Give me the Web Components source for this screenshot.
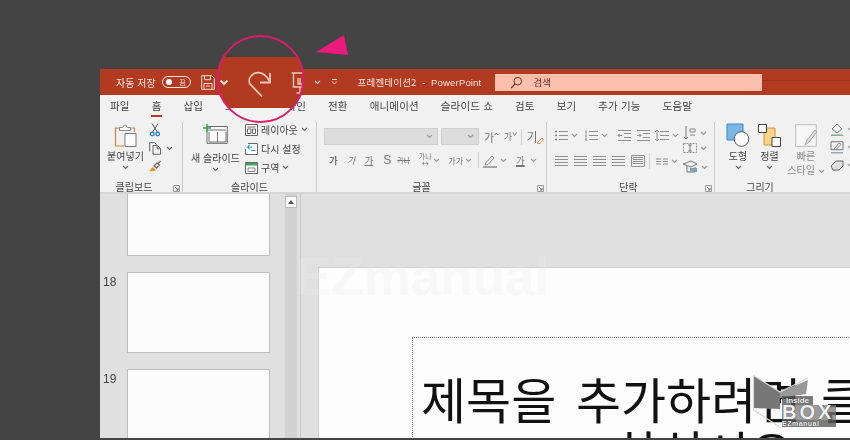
<!DOCTYPE html>
<html lang="ko">
<head>
<meta charset="utf-8">
<style>
  html, body { margin: 0; height: 440px; overflow: hidden; background: #444; }
  body { font-family: "Noto Sans CJK KR", "Noto Sans", sans-serif; }
</style>
</head>
<body>
<ppt-window>
  <title-bar></title-bar>
  <ribbon-tabs></ribbon-tabs>
  <ppt-ribbon></ppt-ribbon>
  <work-area></work-area>
</ppt-window>
<lens-callout></lens-callout>
<logo-mark></logo-mark>

<script>
// every element is just a shadow root filled from a string
const define = (name, css, html, connected) => {
  const template = Object.assign(document.createElement('template'), {
    innerHTML: `<style>${css}</style>${html}`,
  });
  customElements.define(name, class extends HTMLElement {
    constructor() {
      super();
      this.attachShadow({ mode: 'open' });
      this.shadowRoot.appendChild(template.content.cloneNode(true));
    }

    connectedCallback() {
      if (connected) connected(this);
    }
  });
};

const GRAY = '#8f8f8f';
const lines = (rows, x1, x2, c = GRAY) => rows.map(y => `<path d="M${x1} ${y}H${x2}" stroke="${c}"/>`).join('');

const ICONS = {
  chev: [7, 5, `<path d="M1 1l2.500 2.500L6 1" stroke="#666" stroke-width="1.100"/>`],
  chevg: [7, 5, `<path d="M1 1l2.500 2.500L6 1" stroke="#999" stroke-width="1.100"/>`],
  chevw: [7, 5, `<path d="M1 1l2.500 2.500L6 1" stroke="#f3d5ca" stroke-width="1.100"/>`],
  qat: [7, 6, `<path d="M1 .5h5M1 2.500l2.500 2.500L6 2.500" stroke="#f3d5ca"/>`],
  save: [14, 15, `<path d="M.7.7h10l2.600 2.600v11H.7zM3.500.7v4h6v-4M3 14.300V8.500h8v5.800M5 11h4" stroke="#f6dcd2"/>`],
  search: [13, 13, `<circle cx="7.800" cy="5.200" r="3.800" stroke="#6b3526"/><path d="M5 8L1.200 12" stroke="#6b3526" stroke-width="1.200"/>`],
  paste: [23, 24, `<path d="M6 4H1.500v18H10" stroke="#c98a3c" stroke-width="1.200"/><path d="M16 4h4.500v4" stroke="#c98a3c" stroke-width="1.200"/><path d="M5.500 6.500V3.500h3l2-2.500h1l2 2.500h3v3z" fill="#fff" stroke="#8a8a8a"/><path d="M11 9.500h11v13H11z" fill="#fff" stroke="#777"/>`],
  cut: [10, 14, `<path d="M2 .5l5.500 9M8 .5L2.500 9.500" stroke="#555"/><circle cx="2.300" cy="11" r="1.800" stroke="#2b7cd3" stroke-width="1.300"/><circle cx="7.700" cy="11" r="1.800" stroke="#2b7cd3" stroke-width="1.300"/>`],
  copy: [13, 13, `<path d="M.7 9.500V.7h5l1.500 1.500v1M4 3.500h4.500l3 3v5.800H4zM8 3.500v3.300h3.500" stroke="#666"/>`],
  brush: [13, 12, `<path d="M.7 11c1-1 1.500-3 2.800-4l3.500 2.800c-1.500 1.500-4 1.800-6.300 1.200z" fill="#e8912d"/><path d="M5 6l3-3 2.500 2-3 3zM9 3.500L11.500 1" stroke="#666" stroke-width="1.200"/>`],
  newslide: [25, 20, `<path d="M4 2.500h20.300v16.800H4z" fill="#fafafa" stroke="#6a6a6a"/><path d="M5 6h18M14.500 8v10M6 8v10M23 8v10M6 18h17" stroke="#777"/><path d="M0 4h8M4 0v8" stroke="#3fa34d" stroke-width="1.500"/>`],
  layout: [13, 12, `<path d="M.5.5h12v11H.5z" fill="#fff" stroke="#666"/><path d="M2.500 3h8M2.500 5v4.500h3.500V5zM7.500 5h3v4.500h-3z" stroke="#666"/>`],
  reset: [13, 12, `<path d="M3 .5h9.500v11H.5V6" fill="#fff" stroke="#666"/><path d="M7 4H2.500M4.500 2L2.500 4l2 2M6 7.500h4.500" stroke="#2b9fd8" stroke-width="1.200"/>`],
  section: [13, 12, `<path d="M.5.5h12v11H.5z" fill="#fff" stroke="#666"/><path d="M1 1h11v2.500H1z" fill="#46a35a"/><path d="M3 6h7v3.500H3z" stroke="#888"/>`],
  launch: [7, 7, `<path d="M.5.500h6v6h-6z" stroke="#9a9a9a"/><path d="M2 2l3 3M5 3v2H3" stroke="#777"/>`],
  clear: [14, 14, `<path d="M7 12l5-5 1.500 1.500-3.500 4H8z" stroke="#e0955a"/>`],
  pen: [18, 15, `<path d="M5 9.500L11 3l2 2-6 6.500-3 .5z" stroke="${GRAY}"/><path d="M2 13h14v2H2z" fill="#a6a6a6"/>`],
  bullets: [13, 11, `<path d="M0 1.500h2M0 5.500h2M0 9.500h2" stroke="#7a7a7a" stroke-width="1.500"/>${lines([1.5, 5.5, 9.5], 4, 13)}`],
  numbers: [13, 11, `<path d="M1 .5v3M1 4.500v3M1 8v3" stroke="#7a7a7a"/>${lines([1.5, 5.5, 9.5], 4, 13)}`],
  outdent: [13, 11, `${lines([.5, 10.5], 0, 13)}${lines([3.5, 7.5], 6, 13)}<path d="M4 5.500H0M1.500 4L0 5.500 1.500 7" stroke="${GRAY}"/>`],
  indent: [13, 11, `${lines([.5, 10.5], 0, 13)}${lines([3.5, 7.5], 6, 13)}<path d="M0 5.500h4M2.500 4L4 5.500 2.500 7" stroke="${GRAY}"/>`],
  spacing: [14, 11, `${lines([1.5, 5.5, 9.5], 5, 14)}<path d="M2 0v11M0 2l2-2 2 2M0 9l2 2 2-2" stroke="${GRAY}"/>`],
  left: [13, 10, lines([.5, 3.5, 6.5, 9.5], 0, 13)],
  justify: [14, 12, `${lines([2.5, 4.5, 6.5, 8.5], 2, 12)}<path d="M.5.500h13v11H.5z" stroke="${GRAY}"/>`],
  cols: [12, 7, `<path d="M0 1h5M0 3.500h5M0 6h5M7 1h5M7 3.500h5M7 6h5" stroke="${GRAY}"/>`],
  dir: [14, 14, `<path d="M3 0v13M1 11l2 2 2-2" stroke="#777"/><path d="M7 3h5v3H7zM7 9h5" stroke="#888"/>`],
  align: [14, 12, `<path d="M.5 1.500h13v9H.5z" stroke="${GRAY}" stroke-dasharray="2 1"/><path d="M7 3v6M5 3h4M5 9h4" stroke="#777"/>`],
  smart: [15, 12, `<path d="M0 3l8-3 6 3-6 3zM4 5v6h8V6" stroke="#777"/><path d="M7 7h7v4H7z" fill="#7fa2b8"/>`],
  shape: [22, 23, `<path d="M0 0h16v16H0z" fill="#7cb6e6" stroke="#3b87c9"/><circle cx="14.500" cy="15" r="7.300" fill="#fff" stroke="#555"/>`],
  arrange: [23, 23, `<path d="M6 4h11v17H6z" fill="#fbd38a" stroke="#d9922e"/><path d="M.5.500h8v8h-8zM14 13.500h8.500v9H14z" fill="#fff" stroke="#444"/>`],
  quick: [22, 23, `<path d="M.7.700h20.600v21.600H.7z" fill="#f7f7f7" stroke="#bdbdbd"/><path d="M10 21l2-5 8-10 2 2-8 10z" fill="#dcdcdc" stroke="#aaa"/>`],
  fill: [14, 13, `<path d="M2 6l5-5 5 5-5 4z" stroke="#7a7a7a"/><path d="M1 11.500h12v1.500H1z" fill="#7fb08c"/>`],
  line: [14, 13, `<path d="M1 .7h12v8H1z" stroke="#7a7a7a"/><path d="M4 8l5-6 2 1.500-5 5z" stroke="#888"/><path d="M1 11h12v1.500H1z" fill="#9aa"/>`],
  effect: [14, 11, `<path d="M1 6l5-5h7v5l-4 4H3z" fill="#dedede" stroke="#666"/>`],
};

define('ppt-icon', `:host { display: inline-flex; flex: none; } span { display: block; } svg { display: block; overflow: visible; fill: none; }`, `<span id="s"></span>`, host => {
  const [w, h, body] = ICONS[host.getAttribute('name')];
  host.shadowRoot.getElementById('s').innerHTML = `<svg width="${w}" height="${h}" viewBox="0 0 ${w} ${h}">${body}</svg>`;
});

define('ppt-window', `
  :host { display: block; width: 750px; height: 369px; margin: 69px 0 0 100px; overflow: hidden; filter: blur(.3px); }
`, `<slot></slot>`);

define('title-bar', `
  :host { display: flex; align-items: center; height: 26px; background: #b13a20; color: #fbe6de; font-size: 10px; white-space: nowrap; }
  .pill { display: flex; align-items: center; justify-content: space-between; box-sizing: border-box; width: 29px; height: 12px; margin-left: 6px; padding: 0 4px 0 3px; border: 1px solid #fbe6de; border-radius: 6px; font-size: 7px; }
  .pill i { width: 6px; height: 6px; border-radius: 50%; background: #fff; }
  .search { display: flex; align-items: center; width: 267px; height: 17px; margin-left: 14px; background: #fbbfad; color: #5a3024; font-size: 9.500px; }
  .search ppt-icon { margin: 0 10px 0 15px; }
  .rest { flex: 1; height: 1px; margin-top: -4px; background: #a0311a; }
  .name { margin-left: 20px; font-size: 9.500px; letter-spacing: .17px; }
  .name b { font-family: "Liberation Sans", sans-serif; font-weight: 400; }
`, `
  <span style="margin-left:16px">자동 저장</span>
  <span class="pill"><i></i>끔</span>
  <ppt-icon name="save" style="margin-left:10px"></ppt-icon>
  <ppt-icon name="chevw" style="margin-left:99px"></ppt-icon>
  <ppt-icon name="qat" style="margin-left:10px"></ppt-icon>
  <span class="name">프레젠테이션2 <b>&nbsp;-&nbsp; PowerPoint</b></span>
  <span class="search"><ppt-icon name="search"></ppt-icon>검색</span>
  <span class="rest"></span>
`);

define('ribbon-tabs', `
  :host { display: flex; gap: 22px; height: 25px; box-sizing: border-box; padding: 3px 0 0 10px; background: #f1f1f1; color: #444; font-size: 10.500px; letter-spacing: .16px; line-height: 16px; white-space: nowrap; }
  .on { position: relative; }
  .on::after { content: ''; position: absolute; left: -1px; right: -1px; top: 17px; height: 2px; background: #b13a20; }
`, `
  <span>파일</span><span class="on">홈</span><span>삽입</span><span>그리기</span><span>디자인</span><span>전환</span>
  <span>애니메이션</span><span>슬라이드 쇼</span><span>검토</span><span>보기</span><span>추가 기능</span><span>도움말</span>
`);

define('ribbon-group', `
  :host { display: flex; flex-direction: column; flex: none; box-sizing: border-box; height: 72px; border-right: 1px solid #c9c9c9; margin-top: 2px; position: relative; font-size: 10px; color: #444; }
  .body { flex: 1; display: flex; min-height: 0; }
  .foot { height: 16px; line-height: 18px; text-align: center; font-size: 10px; }
  ppt-icon { position: absolute; right: 2px; bottom: 2px; }
  :host([plain]) ppt-icon { display: none; }
`, `<div class="body"><slot></slot></div><div class="foot"><slot name="label"></slot></div><ppt-icon name="launch"></ppt-icon>`);

define('big-button', `
  :host { display: flex; flex-direction: column; align-items: center; line-height: 12px; font-size: 10px; white-space: nowrap; }
`, `<slot></slot>`);

define('small-row', `
  :host { display: flex; align-items: center; gap: 3px; height: 19px; white-space: nowrap; font-size: 10px; }
`, `<slot></slot>`);

define('ppt-ribbon', `
  :host { display: flex; height: 74px; background: #f1f1f1; border-bottom: 2px solid #d6d6d6; box-sizing: border-box; overflow: hidden; color: #444; }
  .col { display: flex; flex-direction: column; }
  .combo { display: flex; align-items: center; justify-content: flex-end; box-sizing: border-box; height: 17px; padding-right: 4px; background: #dcdcdc; border: 1px solid #cfcfcf; }
  .g { font-size: 9.500px; color: #777; display: inline-block; white-space: nowrap; }
  .sep { width: 1px; background: #d0d0d0; }
`, `
  <ribbon-group style="width:83px">
    <big-button style="margin:2px 0 0 7px; width:37px">
      <ppt-icon name="paste" style="margin-bottom:2px"></ppt-icon>붙여넣기<ppt-icon name="chev" style="margin:3px 0 0"></ppt-icon>
    </big-button>
    <div class="col" style="margin:1px 0 0 5px; gap:5px">
      <ppt-icon name="cut" style="margin-left:1px"></ppt-icon>
      <small-row style="height:13px; gap:4px"><ppt-icon name="copy"></ppt-icon><ppt-icon name="chev"></ppt-icon></small-row>
      <ppt-icon name="brush"></ppt-icon>
    </div>
    <span slot="label" style="margin-right:14px">클립보드</span>
  </ribbon-group>

  <ribbon-group style="width:134px" plain>
    <big-button style="margin:2px 0 0 8px; width:49px">
      <ppt-icon name="newslide" style="margin-bottom:8px"></ppt-icon>새 슬라이드<ppt-icon name="chev" style="margin:3px 0 0"></ppt-icon>
    </big-button>
    <div class="col" style="margin:-2px 0 0 5px">
      <small-row><ppt-icon name="layout"></ppt-icon>레이아웃<ppt-icon name="chev"></ppt-icon></small-row>
      <small-row><ppt-icon name="reset"></ppt-icon>다시 설정</small-row>
      <small-row><ppt-icon name="section"></ppt-icon>구역<ppt-icon name="chev"></ppt-icon></small-row>
    </div>
    <span slot="label">슬라이드</span>
  </ribbon-group>

  <ribbon-group style="width:230px">
    <div class="col" style="margin:6px 0 0 7px; gap:5px">
      <div style="display:flex; align-items:center; gap:3px; height:17px">
        <span class="combo" style="width:114px"><ppt-icon name="chevg"></ppt-icon></span>
        <span class="combo" style="width:38px"><ppt-icon name="chevg"></ppt-icon></span>
        <span class="g" style="margin-left:2px; font-size:11px">가ˆ</span>
        <span class="g" style="margin-left:2px; font-size:9px">가ˇ</span>
        <span class="sep" style="height:16px; margin-left:1px"></span>
        <span class="g" style="font-size:12px; margin:0 -10px 0 1px">기</span><ppt-icon name="clear" style="margin-top:3px"></ppt-icon>
      </div>
      <div style="display:flex; align-items:center; height:20px">
        <span class="g" style="margin-left:5px; font-weight:700">가</span>
        <span class="g" style="margin-left:9px; font-style:italic">가</span>
        <span class="g" style="margin-left:9px; text-decoration:underline">가</span>
        <span class="g" style="margin-left:10px; font-family:'Liberation Sans'; font-size:12px">S</span>
        <span class="g" style="margin-left:6px; text-decoration:line-through; font-size:7px; width:14px">가나</span>
        <span class="g" style="margin-left:7px; font-size:7px; line-height:7px; text-align:center; width:14px">가나<br>↔</span>
        <ppt-icon name="chevg" style="margin-left:1px"></ppt-icon>
        <span class="g" style="margin-left:8px; font-size:8px">가가</span>
        <ppt-icon name="chevg" style="margin-left:2px"></ppt-icon>
        <span class="sep" style="margin-left:6px; height:16px"></span>
        <ppt-icon name="pen" style="margin-left:2px"></ppt-icon>
        <ppt-icon name="chevg" style="margin-left:1px"></ppt-icon>
        <span class="g" style="margin-left:9px; text-decoration:underline; text-decoration-thickness:2px">가</span>
        <ppt-icon name="chevg" style="margin-left:5px"></ppt-icon>
      </div>
    </div>
    <span slot="label" style="margin-right:20px">글꼴</span>
  </ribbon-group>

  <ribbon-group style="width:168px">
    <div class="col" style="margin:8px 0 0 8px; gap:14px">
      <div style="display:flex; align-items:center; gap:3px; height:11px">
        <ppt-icon name="bullets"></ppt-icon><ppt-icon name="chevg"></ppt-icon>
        <ppt-icon name="numbers" style="margin-left:4px"></ppt-icon><ppt-icon name="chevg"></ppt-icon>
        <ppt-icon name="outdent" style="margin-left:7px"></ppt-icon>
        <ppt-icon name="indent" style="margin-left:3px"></ppt-icon>
        <ppt-icon name="spacing" style="margin-left:2px"></ppt-icon><ppt-icon name="chevg"></ppt-icon>
      </div>
      <div style="display:flex; align-items:center; gap:6px; height:12px">
        <ppt-icon name="left"></ppt-icon><ppt-icon name="left"></ppt-icon><ppt-icon name="left"></ppt-icon><ppt-icon name="left"></ppt-icon>
        <ppt-icon name="justify"></ppt-icon>
        <span class="sep" style="height:16px; margin-left:-2px"></span>
        <ppt-icon name="cols"></ppt-icon><ppt-icon name="chevg" style="margin-left:-3px"></ppt-icon>
      </div>
    </div>
    <div class="col" style="margin:4px 0 0 4px; gap:1px">
      <small-row style="height:14px"><ppt-icon name="dir"></ppt-icon><ppt-icon name="chevg"></ppt-icon></small-row>
      <small-row style="height:14px"><ppt-icon name="align"></ppt-icon><ppt-icon name="chevg"></ppt-icon></small-row>
      <small-row style="height:14px; margin-top:4px"><ppt-icon name="smart"></ppt-icon><ppt-icon name="chevg"></ppt-icon></small-row>
    </div>
    <span slot="label" style="margin-right:4px">단락</span>
  </ribbon-group>

  <ribbon-group style="width:136px; border:0" plain>
    <big-button style="margin:2px 0 0 12px; width:22px">
      <ppt-icon name="shape" style="margin-bottom:3px"></ppt-icon>도형<ppt-icon name="chev" style="margin:3px 0 0"></ppt-icon>
    </big-button>
    <big-button style="margin:2px 0 0 9px; width:23px">
      <ppt-icon name="arrange" style="margin-bottom:3px"></ppt-icon>정렬<ppt-icon name="chev" style="margin:3px 0 0"></ppt-icon>
    </big-button>
    <big-button style="margin:2px 0 0 14px; width:22px; color:#8c8c8c">
      <ppt-icon name="quick" style="margin-bottom:3px"></ppt-icon>빠른<span style="line-height:15px">스타일 <ppt-icon name="chevg"></ppt-icon></span>
    </big-button>
    <div class="col" style="margin:0 0 0 13px; padding-top:1px; gap:5px">
      <small-row style="height:13px"><ppt-icon name="fill"></ppt-icon><ppt-icon name="chevg"></ppt-icon></small-row>
      <small-row style="height:13px"><ppt-icon name="line"></ppt-icon><ppt-icon name="chevg"></ppt-icon></small-row>
      <small-row style="height:13px"><ppt-icon name="effect"></ppt-icon><ppt-icon name="chevg"></ppt-icon></small-row>
    </div>
    <span slot="label" style="margin-right:46px">그리기</span>
  </ribbon-group>
`);

define('slide-thumb', `
  :host { display: flex; flex: none; height: 81px; font-size: 12px; color: #444; font-family: "Liberation Sans", sans-serif; line-height: 14px; }
  span { width: 27px; box-sizing: border-box; padding: 3px 0 0 3px; }
  i { width: 143px; box-sizing: border-box; height: 100%; background: #fbfbfb; border: 1px solid #bdbdbd; }
`, `<span><slot></slot></span><i></i>`);

define('work-area', `
  :host { display: flex; height: 244px; background: #e0e0e0; position: relative; overflow: hidden; }
  .pane { width: 185px; display: flex; flex-direction: column; gap: 16px; margin-top: -19px; flex: none; }
  .track { width: 12px; flex: none; background: #d2d2d2; }
  .up { display: flex; align-items: center; justify-content: center; box-sizing: border-box; height: 12px; margin: 2px 0 0; background: #fafafa; border: 1px solid #bcbcbc; }
  .up::before { content: ''; border: 3px solid transparent; border-top: 0; border-bottom: 4px solid #555; }
  .gap { width: 3px; flex: none; border-right: 1px solid #c8c8c8; }
  .stage { flex: 1; padding: 73px 0 0 17px; }
  .slide { width: 800px; height: 300px; background: #fdfdfd; border: 1px solid #cfcfcf; padding: 69px 0 0 93px; }
  .title { width: 700px; height: 200px; border: 1px dotted #777; border-width: 1px 0 0 1px; color: #111; font-size: 49px; word-spacing: 6px; line-height: 53px; white-space: nowrap; padding-top: 33px; }
  .title div { padding-left: 8px; }
  .title div + div { padding-left: 201px; }
  .mark { position: absolute; left: 196px; top: 53px; font: 700 53px/60px "Liberation Sans", sans-serif; color: rgba(235,235,235,.25); }
`, `
  <div class="pane">
    <slide-thumb></slide-thumb>
    <slide-thumb>18</slide-thumb>
    <slide-thumb>19</slide-thumb>
  </div>
  <div class="track"><div class="up"></div></div>
  <div class="gap"></div>
  <div class="stage">
    <div class="slide">
      <div class="title"><div>제목을 추가하려면 클릭</div><div>하십시오</div></div>
    </div>
  </div>
  <div class="mark">EZmanual</div>
`);

// magnified toolbar spot, svg uses page coordinates
define('lens-callout', `
  :host { position: absolute; left: 0; top: 0; display: block; }
  svg { display: block; overflow: visible; fill: none; }
`, `
  <svg width="850" height="130" viewBox="0 0 850 130">
    <defs><clipPath id="c"><circle cx="260.500" cy="79" r="43"/></clipPath></defs>
    <g clip-path="url(#c)">
      <rect x="210" y="30" width="100" height="27" fill="#444"/>
      <rect x="210" y="57" width="100" height="51" fill="#b13a20"/>
      <rect x="210" y="108" width="100" height="20" fill="#f3f3f3"/>
      <path d="M220.500 80.500l3.500 3.500 3.500-3.500" stroke="#f6dcd2" stroke-width="2"/>
      <path d="M262 96.500L250 84c-2-4 0-8 4-10.500 5-2 11 0 16 8" stroke="#f0c9ba" stroke-width="1.800"/>
      <path d="M270 73v9.500h-10" stroke="#f0c9ba" stroke-width="1.800"/>
      <path d="M291.500 73H306M293.500 73v14H302M300 87v6M296.500 93h7M298 78v6h4M300 78v6" stroke="#f0c9ba" stroke-width="1.400"/>
    </g>
    <circle cx="260.500" cy="79" r="43" stroke="#d81e6a" stroke-width="2"/>
    <path d="M316 52l28-17 4 20z" fill="#ec1a7d"/>
  </svg>
`);

define('logo-mark', `
  :host { position: absolute; left: 753px; top: 375px; display: block; width: 84px; height: 53px; color: #f1f1f1; }
  svg { position: absolute; left: 0; top: 0; overflow: visible; }
  .t { position: absolute; left: 29px; top: 21px; width: 54px; font-family: "Liberation Sans", sans-serif; font-weight: 700; text-shadow: 0 0 1px #333; }
  .t div { overflow: hidden; white-space: nowrap; }
  .a { font-size: 8px; line-height: 9px; background: rgba(90,90,90,.8); width: 31px; text-align: center; }
  .b { font-size: 20px; letter-spacing: 3px; line-height: 15px; background: rgba(120,120,120,.75); }
  .c { font-size: 7px; line-height: 7px; letter-spacing: .5px; background: rgba(90,90,90,.8); }
`, `
  <svg width="84" height="53" viewBox="0 0 84 53">
    <path d="M.5.500L27 17v17L.5 33z" fill="#777"/>
    <path d="M27 17L55 5l-2 14-26 4z" fill="#999"/>
    <path d="M.5.500L27 17 55 3M.5.500V35L27 52" fill="none" stroke="#d5d5d5" stroke-width="1.200"/>
  </svg>
  <div class="t"><div class="a">inside</div><div class="b">BOX</div><div class="c">EZmanual</div></div>
`);
</script>
</body>
</html>
